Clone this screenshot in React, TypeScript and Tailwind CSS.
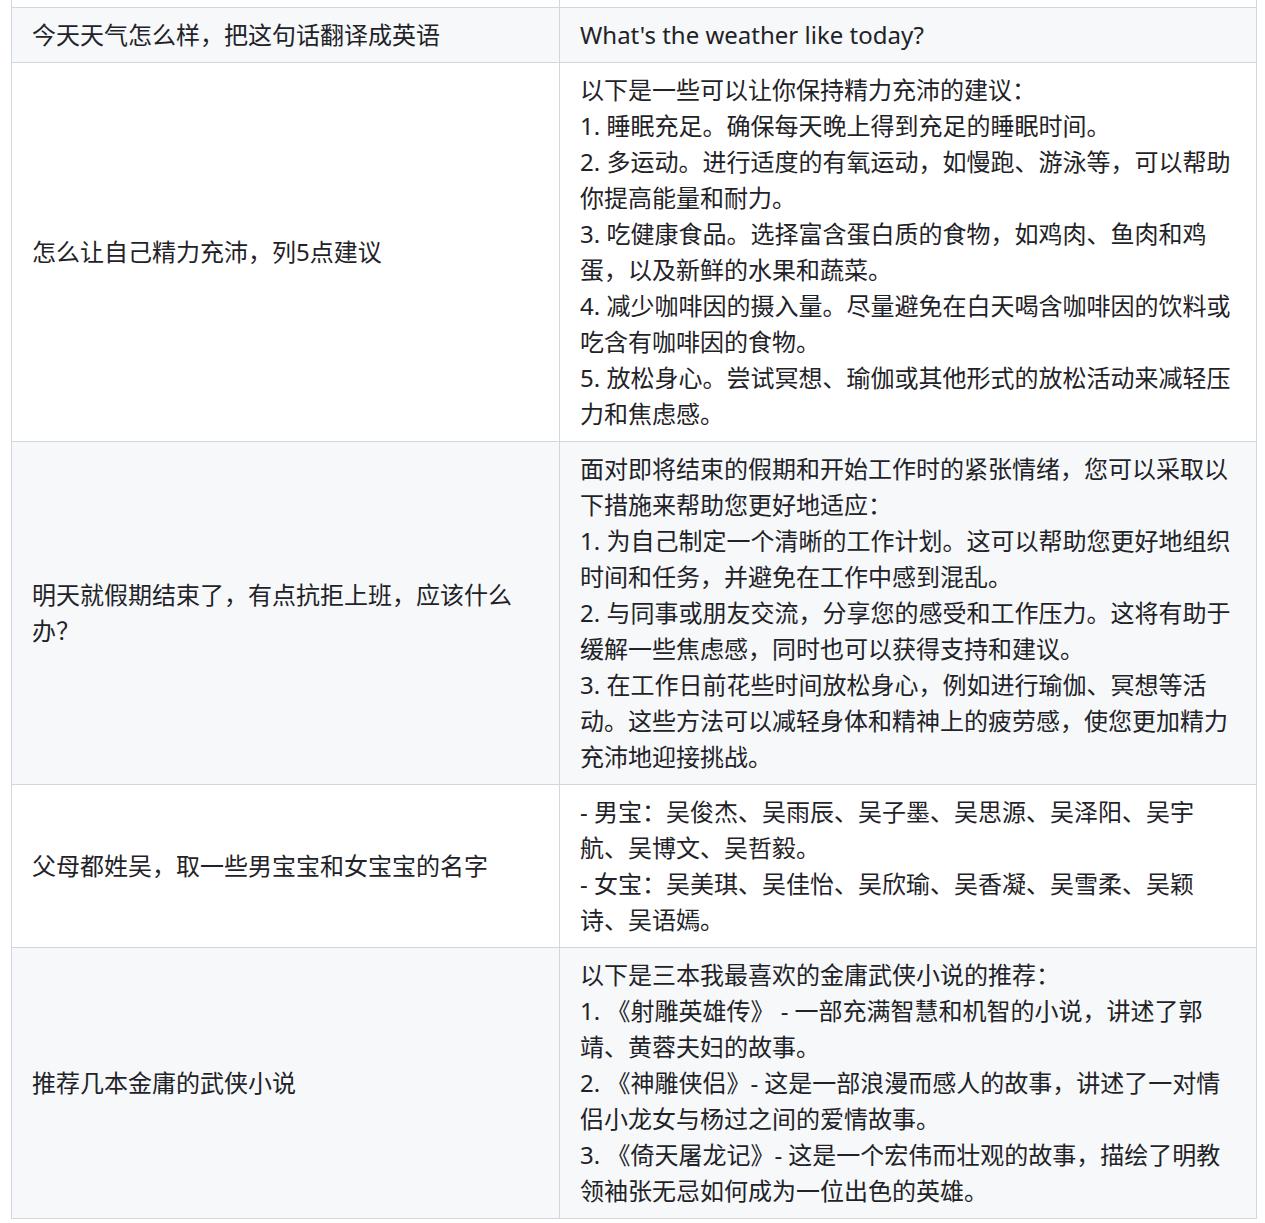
import React from "react";

const rows: { q: string[]; a: string[]; gray: boolean }[] = [
  { q: ["今天天气怎么样，把这句话翻译成英语"], a: ["What's the weather like today?"], gray: true },
  {
    q: ["怎么让自己精力充沛，列5点建议"],
    a: [
      "以下是一些可以让你保持精力充沛的建议：",
      "1. 睡眠充足。确保每天晚上得到充足的睡眠时间。",
      "2. 多运动。进行适度的有氧运动，如慢跑、游泳等，可以帮助",
      "你提高能量和耐力。",
      "3. 吃健康食品。选择富含蛋白质的食物，如鸡肉、鱼肉和鸡",
      "蛋，以及新鲜的水果和蔬菜。",
      "4. 减少咖啡因的摄入量。尽量避免在白天喝含咖啡因的饮料或",
      "吃含有咖啡因的食物。",
      "5. 放松身心。尝试冥想、瑜伽或其他形式的放松活动来减轻压",
      "力和焦虑感。",
    ],
    gray: false,
  },
  {
    q: ["明天就假期结束了，有点抗拒上班，应该什么", "办？"],
    a: [
      "面对即将结束的假期和开始工作时的紧张情绪，您可以采取以",
      "下措施来帮助您更好地适应：",
      "1. 为自己制定一个清晰的工作计划。这可以帮助您更好地组织",
      "时间和任务，并避免在工作中感到混乱。",
      "2. 与同事或朋友交流，分享您的感受和工作压力。这将有助于",
      "缓解一些焦虑感，同时也可以获得支持和建议。",
      "3. 在工作日前花些时间放松身心，例如进行瑜伽、冥想等活",
      "动。这些方法可以减轻身体和精神上的疲劳感，使您更加精力",
      "充沛地迎接挑战。",
    ],
    gray: true,
  },
  {
    q: ["父母都姓吴，取一些男宝宝和女宝宝的名字"],
    a: [
      "- 男宝：吴俊杰、吴雨辰、吴子墨、吴思源、吴泽阳、吴宇",
      "航、吴博文、吴哲毅。",
      "- 女宝：吴美琪、吴佳怡、吴欣瑜、吴香凝、吴雪柔、吴颖",
      "诗、吴语嫣。",
    ],
    gray: false,
  },
  {
    q: ["推荐几本金庸的武侠小说"],
    a: [
      "以下是三本我最喜欢的金庸武侠小说的推荐：",
      "1. 《射雕英雄传》 - 一部充满智慧和机智的小说，讲述了郭",
      "靖、黄蓉夫妇的故事。",
      "2. 《神雕侠侣》- 这是一部浪漫而感人的故事，讲述了一对情",
      "侣小龙女与杨过之间的爱情故事。",
      "3. 《倚天屠龙记》- 这是一个宏伟而壮观的故事，描绘了明教",
      "领袖张无忌如何成为一位出色的英雄。",
    ],
    gray: true,
  },
];

export default function App() {
  return (
    <div
      className="w-[1265px] h-[1223px] bg-white overflow-hidden text-[#1f2328] text-[24px] leading-[36px]"
      style={{ fontFamily: '"Noto Sans", "Noto Sans CJK SC", sans-serif' }}
    >
      <div className="ml-[11px] w-[1246px] border-l border-r border-[#d0d7de]">
        <div className="grid grid-cols-[548px_1fr]">
          <div className="h-[8px] border-r border-b border-[#d0d7de]" />
          <div className="h-[8px] border-b border-[#d0d7de]" />
          {rows.map((r, i) => (
            <React.Fragment key={i}>
              <div
                className={`flex flex-col justify-center px-[20px] py-[9px] border-r border-b border-[#d0d7de] ${r.gray ? "bg-[#f6f8fa]" : "bg-white"}`}
              >
                {r.q.map((l, j) => (
                  <div key={j} className="whitespace-nowrap">{l}</div>
                ))}
              </div>
              <div
                className={`px-[20px] py-[9px] border-b border-[#d0d7de] ${r.gray ? "bg-[#f6f8fa]" : "bg-white"}`}
              >
                {r.a.map((l, j) => (
                  <div key={j} className="whitespace-nowrap">{l}</div>
                ))}
              </div>
            </React.Fragment>
          ))}
        </div>
      </div>
    </div>
  );
}
